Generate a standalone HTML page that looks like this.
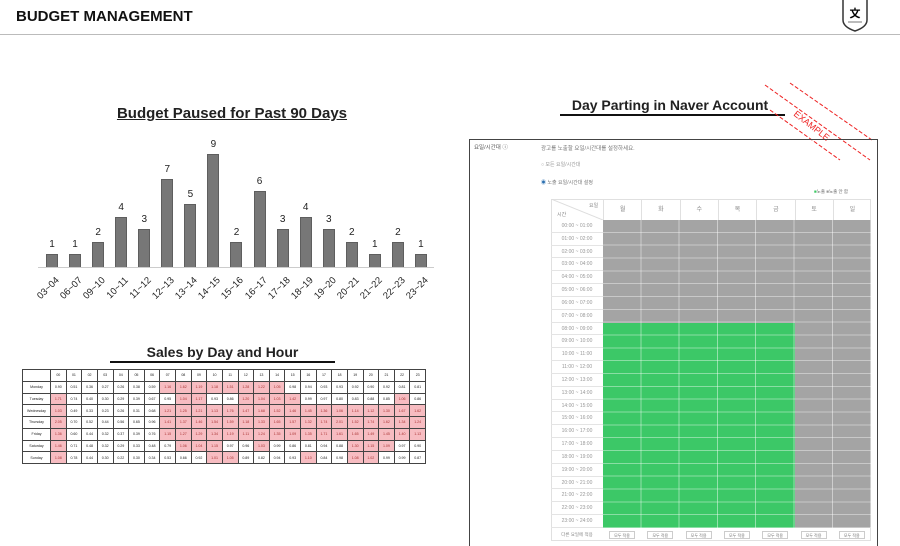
<!DOCTYPE html>
<html><head><meta charset="utf-8"><style>
*{margin:0;padding:0;box-sizing:border-box}
body{width:900px;height:546px;background:#fff;position:relative;overflow:hidden;font-family:"Liberation Sans","Noto Sans CJK KR",sans-serif;color:#222}
.a{position:absolute}
.bar{position:absolute;width:12px;background:#777;border:1px solid #5e5e5e;border-bottom:none}
.bv{position:absolute;width:20px;text-align:center;font-size:10px;color:#222}
.bl{position:absolute;font-size:9.5px;transform:rotate(-45deg);transform-origin:right top;white-space:nowrap;text-align:right;width:40px}
table.s{position:absolute;left:22px;top:369px;width:404px;height:94px;border-collapse:collapse;table-layout:fixed;font-size:3.6px}
table.s td{border:1px solid #444;text-align:center;height:11.75px;padding:0}
table.s td.p{background:#f7bcc1;color:#a33}
table.s td.l{width:28px}
.tl{position:absolute;left:551px;width:52px;font-size:5px;color:#999;text-align:center;border-bottom:1px solid #e4e4e4;height:12.83px;line-height:12.83px}
.dh{position:absolute;top:200px;height:20px;width:38.3px;font-size:6px;color:#888;text-align:center;line-height:20px;border-left:1px solid #e0e0e0}
.btn{position:absolute;top:531px;width:26px;height:8px;border:1px solid #ccc;font-size:4px;color:#777;text-align:center;line-height:7px;background:#fff}
</style></head><body>
<div class="a" style="left:16px;top:8px;font-size:15px;font-weight:bold;color:#111">BUDGET MANAGEMENT</div>
<div class="a" style="left:0;top:34px;width:900px;height:1px;background:#bbb"></div>
<svg class="a" style="left:840px;top:0" width="30" height="32" viewBox="0 0 30 32"><path d="M3 0 V20 Q3 27 15 31 Q27 27 27 20 V0" fill="#fff" stroke="#333" stroke-width="1.5"/><text x="15" y="17" font-size="11" text-anchor="middle" font-weight="bold" font-family="Noto Sans CJK KR">文</text><line x1="8" y1="22" x2="22" y2="22" stroke="#555" stroke-width="0.8"/></svg>

<div class="a" style="left:82px;top:105px;width:300px;text-align:center;font-size:15px;font-weight:bold;text-decoration:underline">Budget Paused for Past 90 Days</div>
<div class="a" style="left:38px;top:267px;width:396px;height:1px;background:#ccc"></div>
<div id="bars"></div>

<div class="a" style="left:110px;top:344px;width:225px;text-align:center;font-size:14px;font-weight:bold">Sales by Day and Hour</div>
<div class="a" style="left:110px;top:361px;width:225px;height:2px;background:#111"></div>
<table class="s" id="st"></table>

<div class="a" style="left:560px;top:97px;width:220px;text-align:center;font-size:14px;font-weight:bold">Day Parting in Naver Account</div>
<div class="a" style="left:560px;top:114px;width:225px;height:2px;background:#111"></div>
<svg class="a" style="left:760px;top:80px" width="120" height="90"><line x1="5" y1="5" x2="110" y2="80" stroke="#e22" stroke-dasharray="4,2"/><line x1="30" y1="3" x2="112" y2="60" stroke="#e22" stroke-dasharray="4,2"/><line x1="10" y1="30" x2="80" y2="80" stroke="#e22" stroke-dasharray="4,2"/><text x="0" y="0" transform="translate(33,35) rotate(38)" fill="#e22" font-size="9" font-family="Liberation Sans">EXAMPLE</text></svg>

<div class="a" style="left:469px;top:139px;width:409px;height:407px;border:1px solid #444;border-bottom:none"></div>
<div class="a" style="left:474px;top:143px;font-size:5.5px;color:#555">요일/시간대 ⓘ</div>
<div class="a" style="left:541px;top:144px;font-size:5.5px;color:#777">광고를 노출할 요일/시간대를 설정하세요.</div>
<div class="a" style="left:541px;top:161px;font-size:5px;color:#999">○ 모든 요일/시간대</div>
<div class="a" style="left:541px;top:179px;font-size:5px;color:#777"><span style="color:#2a6fb0">◉</span> 노출 요일/시간대 설정</div>
<div class="a" style="left:814px;top:189px;font-size:4.5px;color:#666"><span style="color:#3cc864">■</span>노출 <span style="color:#999">■</span>노출 안 함</div>
<div class="a" style="left:551px;top:199px;width:320px;height:342px;border:1px solid #e0e0e0"></div>
<svg class="a" style="left:551px;top:199px" width="52" height="21"><line x1="0" y1="0" x2="52" y2="21" stroke="#ddd"/><text x="38" y="8" font-size="5" fill="#888">요일</text><text x="6" y="17" font-size="5" fill="#888">시간</text></svg>
<div id="days"></div>
<div class="a" style="left:603px;top:220px;width:268px;height:308px;background:#a4a4a4"></div>
<div class="a" style="left:603px;top:322.6px;width:192px;height:205.4px;background:#3cc867"></div>
<div class="a" style="left:603px;top:220px;width:268px;height:308px;background:repeating-linear-gradient(to right,transparent 0,transparent 37.3px,rgba(255,255,255,.45) 37.3px,rgba(255,255,255,.45) 38.3px),repeating-linear-gradient(to bottom,transparent 0,transparent 11.83px,rgba(255,255,255,.4) 11.83px,rgba(255,255,255,.4) 12.83px)"></div>
<div id="times"></div>
<div class="a" style="left:551px;top:528px;width:52px;font-size:4.5px;color:#888;text-align:center;line-height:13px">다른 요일에 적용</div>
<div id="btns"></div>

<script>
var v=[1,1,2,4,3,7,5,9,2,6,3,4,3,2,1,2,1],L=["03~04","06~07","09~10","10~11","11~12","12~13","13~14","14~15","15~16","16~17","17~18","18~19","19~20","20~21","21~22","22~23","23~24"],h="";
for(var i=0;i<17;i++){var c=52+i*23.06,ht=v[i]*12.6;h+='<div class="bar" style="left:'+(c-6)+'px;top:'+(267-ht)+'px;height:'+ht+'px"></div><div class="bv" style="left:'+(c-10)+'px;top:'+(267-ht-15)+'px">'+v[i]+'</div><div class="bl" style="left:'+(c-38)+'px;top:275px">'+L[i]+'</div>';}
document.getElementById("bars").innerHTML=h;
var d=[["Monday","0.90 0.51 0.36 0.27 0.26 0.38 0.59 1.16 1.62 1.19 1.18 1.51 1.28 1.22 1.05 0.98 0.94 0.93 0.93 0.92 0.90 0.92 0.81 0.81"],["Tuesday","1.71 0.74 0.40 0.30 0.29 0.39 0.67 0.95 1.04 1.17 0.93 0.86 1.20 1.04 1.03 1.42 0.99 0.97 0.80 0.83 0.88 0.85 1.06 0.86"],["Wednesday","1.03 0.49 0.33 0.23 0.26 0.31 0.68 1.21 1.25 1.21 1.13 1.76 1.47 1.68 1.52 1.46 1.45 1.36 1.06 1.14 1.12 1.30 1.67 1.62"],["Thursday","2.05 0.70 0.52 0.44 0.56 0.65 0.96 1.41 1.37 1.46 1.54 1.59 1.18 1.33 1.65 1.57 1.32 1.74 2.01 1.52 1.74 1.62 1.34 1.24"],["Friday","1.36 0.60 0.44 0.32 0.37 0.39 0.76 1.15 1.27 1.29 1.34 1.19 1.11 1.24 1.35 1.09 1.35 1.71 1.61 1.65 1.49 1.45 1.40 1.13"],["Saturday","1.46 0.71 0.48 0.32 0.29 0.33 0.48 0.79 1.06 1.04 1.15 0.97 0.96 1.03 0.99 0.86 0.81 0.94 0.88 1.30 1.15 1.09 0.97 0.90"],["Sunday","1.08 0.78 0.44 0.30 0.22 0.30 0.34 0.53 0.66 0.92 1.01 1.05 0.89 0.82 0.94 0.93 1.10 0.84 0.98 1.08 1.02 0.99 0.99 0.87"]];
var t='<tr><td class="l"></td>';for(i=0;i<24;i++)t+='<td>'+(i<10?'0':'')+i+'</td>';t+='</tr>';
d.forEach(function(r){t+='<tr><td class="l">'+r[0]+'</td>';r[1].split(" ").forEach(function(x){t+='<td'+(parseFloat(x)>1?' class="p"':'')+'>'+x+'</td>'});t+='</tr>'});
document.getElementById("st").innerHTML=t;
var dn=["월","화","수","목","금","토","일"];h="";for(i=0;i<7;i++)h+='<div class="dh" style="left:'+(603+i*38.3)+'px">'+dn[i]+'</div>';document.getElementById("days").innerHTML=h;
h="";for(i=0;i<24;i++){var a=(i<10?'0':'')+i,b=(i+1<10?'0':'')+(i+1);h+='<div class="tl" style="top:'+(220+i*12.83)+'px">'+a+':00 ~ '+b+':00</div>';}document.getElementById("times").innerHTML=h;
h="";for(i=0;i<7;i++)h+='<div class="btn" style="left:'+(609+i*38.3)+'px">모두 적용</div>';document.getElementById("btns").innerHTML=h;
</script>
</body></html>
